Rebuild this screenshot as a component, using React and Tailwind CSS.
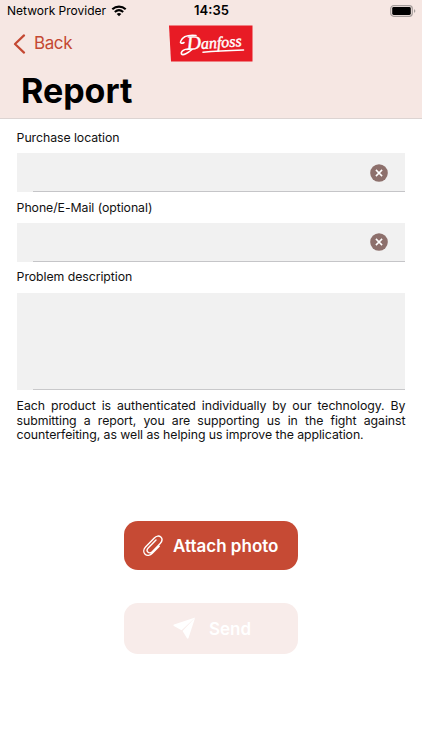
import React, { useState } from 'react';

const WifiIcon = () => (
  <svg viewBox="0 0 16 12" className="h-[12px] w-[16px]" fill="none">
    <path d="M1.3 4.3C5.2.7 10.8.7 14.7 4.3" stroke="black" strokeWidth="2.1" />
    <path d="M3.8 7C6.3 4.8 9.7 4.8 12.2 7" stroke="black" strokeWidth="2" />
    <path d="M5.7 8.9C7 7.8 9 7.8 10.3 8.9L8 11.2Z" fill="black" />
  </svg>
);

const BatteryIcon = () => (
  <svg viewBox="0 0 26 12" className="h-[12px] w-[26px]" fill="none">
    <rect x="0.7" y="0.7" width="21.6" height="10.6" rx="3" stroke="#a59d9b" strokeWidth="1.2" />
    <rect x="2.2" y="2.1" width="18.6" height="7.8" rx="1.4" fill="black" />
    <path d="M24 4.2v3.6c1-.4 1.3-1 1.3-1.8S25 4.6 24 4.2Z" fill="#a59d9b" />
  </svg>
);

const Logo = () => (
  <svg viewBox="0 0 84 37" className="h-[37px] w-[84px] overflow-visible">
    <path d="M0 0.5H83.5V36.5H2Z" fill="#e81b25" />
    <text
      x="18"
      y="25"
      fill="white"
      stroke="white"
      strokeWidth="0.45"
      fontSize="16"
      fontStyle="italic"
      fontFamily="Liberation Serif, serif"
      textLength="55"
      lengthAdjust="spacingAndGlyphs"
      transform="rotate(-4 18 25)"
    >
      <tspan fontSize="20">D</tspan>anfoss
    </text>
    <path
      d="M15 17.5C12.5 19 10.8 18 11.8 16C13.5 12 19 9.7 27 10.5M20 24C15.5 23.5 11.5 26.5 12.5 29C14 31 19 28 23 24.5M34 27.2C46 26 60 25.4 74.5 25"
      fill="none"
      stroke="white"
      strokeWidth="1.6"
      strokeLinecap="round"
    />
  </svg>
);

const ClearIcon = () => (
  <svg viewBox="0 0 18 18" className="h-[18px] w-[18px]">
    <circle cx="9" cy="9" r="8.8" fill="#8d706c" />
    <path d="M5.9 5.9l6.2 6.2M12.1 5.9l-6.2 6.2" stroke="white" strokeWidth="1.5" />
  </svg>
);

const ClipIcon = () => (
  <svg viewBox="0 0 20 22" className="mt-[2px] h-[22px] w-[20px]" fill="none" stroke="white" strokeWidth="1.4" strokeLinecap="round" strokeLinejoin="round">
    <path d="M16.2 11.2L9.3 18.3C7.2 20.6 4 21.2 2.1 19.2C.1 17.2.5 14.2 2.5 12.1L11.3 2.9C13.3.8 16.1.4 17.8 2.1C19.5 3.8 19.1 6.5 17.2 8.5L9 16.9C7.7 18.2 5.9 18.2 4.8 17.1C3.7 15.9 3.9 14.3 5.2 12.9L13 5" />
  </svg>
);

const SendIcon = () => (
  <svg viewBox="0 0 23 22" className="h-[22px] w-[23px]" fill="white">
    <path d="M22.2.6L1 7.6C.3 8 .3 8.7.9 9.1L8.6 13.2Z" />
    <path d="M22.2.6L9.6 14.1L14 21.2C14.5 21.9 15.2 21.8 15.5 21Z" />
  </svg>
);

const Field = ({ label, value, onChange }) => (
  <div className="h-[69.5px]">
    <label className="block h-[23px] text-[12.3px] leading-[15px] tracking-[-0.06px]">{label}</label>
    <div className="flex h-[39px] flex-col bg-[#f1f1f1]">
      <div className="flex flex-1 items-center pt-px pr-[17px] pl-4">
        <input
          value={value}
          onChange={(e) => onChange(e.target.value)}
          aria-label={label}
          className="min-w-0 flex-1 bg-transparent text-sm outline-none"
        />
        <button type="button" onClick={() => onChange('')} aria-label="Clear">
          <ClearIcon />
        </button>
      </div>
      <div className="ml-4 h-px bg-[#c5c5c8]" />
    </div>
  </div>
);

const App = () => {
  const [location, setLocation] = useState('');
  const [contact, setContact] = useState('');
  const [description, setDescription] = useState('');

  return (
    <div className="min-h-[750px] w-full overflow-hidden bg-white font-['Inter',sans-serif] text-[#111]">
      {/* Header */}
      <header className="h-[119px] border-b border-[#dcd4d2] bg-[#f6e7e3] text-black">
        <div className="grid h-[22px] grid-cols-3 items-center pr-[6px] pl-[7px]">
          <div className="flex items-center gap-[5px] text-[12px] whitespace-nowrap">
            Network Provider
            <WifiIcon />
          </div>
          <div className="text-center text-[13px] font-semibold">14:35</div>
          <div className="flex justify-end">
            <BatteryIcon />
          </div>
        </div>
        <div className="grid h-[43px] grid-cols-3 px-[13px]">
          <button type="button" className="flex h-[43px] items-center gap-[8px] text-[17px] tracking-[-0.4px] text-[#c44832]">
            <svg viewBox="0 0 13 20" className="h-[20px] w-[13px]" fill="none" stroke="currentColor" strokeWidth="2.2" strokeLinecap="round" strokeLinejoin="round">
              <path d="M11 1.4L2 10L11 18.6" />
            </svg>
            Back
          </button>
          <div className="flex justify-center pt-[3px]">
            <Logo />
          </div>
        </div>
        <h1 className="pl-[21px] text-[34px] leading-[51px] font-bold">Report</h1>
      </header>

      {/* Form */}
      <main className="px-[16.6px] pt-[11px]">
        <Field label="Purchase location" value={location} onChange={setLocation} />
        <Field label="Phone/E-Mail (optional)" value={contact} onChange={setContact} />
        <label className="block h-[23.5px] text-[12.3px] leading-[15px] tracking-[-0.06px]">Problem description</label>
        <div className="flex h-[97px] flex-col bg-[#f1f1f1]">
          <textarea
            value={description}
            onChange={(e) => setDescription(e.target.value)}
            aria-label="Problem description"
            className="flex-1 resize-none bg-transparent px-4 py-2 text-sm outline-none"
          />
          <div className="ml-4 h-px bg-[#c9c9cb]" />
        </div>
        <p className="pt-[9.3px] text-justify text-[12.3px] leading-[14.7px] tracking-[-0.06px]">
          Each product is authenticated individually by our technology. By submitting a report, you are supporting us in
          the fight against counterfeiting, as well as helping us improve the application.
        </p>

        {/* Actions */}
        <div className="flex flex-col items-center gap-[33px] pt-[77.7px]">
          <button type="button" className="flex h-[49px] w-[174px] items-center rounded-[14px] bg-[#c64a34] pl-[19px] text-[17px] font-semibold text-white">
            <ClipIcon />
            <span className="ml-[10px] pt-[3px]">Attach photo</span>
          </button>
          <button type="button" disabled className="flex h-[51px] w-[174px] items-center rounded-[14px] bg-[#f8ecea] pl-[49px] text-[17px] font-semibold text-white">
            <SendIcon />
            <span className="ml-[13px] pt-[3px]">Send</span>
          </button>
        </div>
      </main>
    </div>
  );
};

export default App;
